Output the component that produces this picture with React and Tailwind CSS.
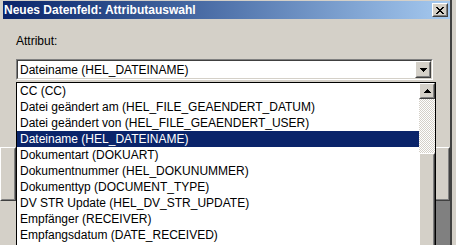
import React from "react";

const items = [
  "CC (CC)",
  "Datei geändert am (HEL_FILE_GEAENDERT_DATUM)",
  "Datei geändert von (HEL_FILE_GEAENDERT_USER)",
  "Dateiname (HEL_DATEINAME)",
  "Dokumentart (DOKUART)",
  "Dokumentnummer (HEL_DOKUNUMMER)",
  "Dokumenttyp (DOCUMENT_TYPE)",
  "DV STR Update (HEL_DV_STR_UPDATE)",
  "Empfänger (RECEIVER)",
  "Empfangsdatum (DATE_RECEIVED)",
];

const selected = 3;

function Raised({ className = "", children }) {
  return (
    <div className={`border border-t-white border-l-white border-r-[#404040] border-b-[#404040] bg-[#d4d0c8] ${className}`}>
      <div className="w-full h-full border border-t-[#d4d0c8] border-l-[#d4d0c8] border-r-[#808080] border-b-[#808080] flex items-center justify-center">
        {children}
      </div>
    </div>
  );
}

export default function App() {
  return (
    <div className="relative w-[456px] h-[245px] overflow-hidden bg-[#d4d0c8] text-[12px] leading-[16px] text-black font-['Liberation_Sans',Arial,sans-serif]">
      <div className="w-[452px] h-full border-r-2 border-r-[#404040] pl-[3px] pt-[1px] flex flex-col">
        <div className="h-[18px] w-[447px] flex items-center justify-between pl-[1px] pr-[2px] bg-gradient-to-r from-[#0a246a] to-[#a6caf0]">
          <span className="text-white font-bold">Neues Datenfeld: Attributauswahl</span>
          <Raised className="w-[16px] h-[14px]">
            <svg width="8" height="7" viewBox="0 0 8 7">
              <path d="M0 0h2v1h1v1h2V1h1V0h2v1h-1v1h-1v1h-1v1h1v1h1v1h1v1H6V6H5V5H3v1H2v1H0V6h1V5h1V4h1V3H2V2H1V1H0z" fill="#000" />
            </svg>
          </Raised>
        </div>
        <div className="pl-[13px] pt-[14px]">
          <div>Attribut:</div>
          <div className="mt-[10px] w-[417px] h-[21px] border border-t-[#808080] border-l-[#808080] border-r-white border-b-white">
            <div className="h-full border border-t-[#404040] border-l-[#404040] border-r-[#d4d0c8] border-b-[#d4d0c8] bg-white flex items-center">
              <span className="flex-1 pl-[2px]">Dateiname (HEL_DATEINAME)</span>
              <Raised className="w-[16px] h-[17px]">
                <svg width="7" height="4" viewBox="0 0 7 4">
                  <path d="M0 0h7v1H6v1H5v1H4v1H3V3H2V2H1V1H0z" fill="#000" />
                </svg>
              </Raised>
            </div>
          </div>
        </div>
        <div className="flex justify-between mt-[67px]">
          <Raised className="w-[16px] h-[54px] -ml-[3px]" />
          <Raised className="w-[16px] h-[54px]" />
        </div>
        <div className="flex-1 flex">
          <div className="flex-1" />
          <div className="w-[20px] bg-[#808080]" />
        </div>
      </div>

      <div className="absolute left-[16px] top-[82px] w-[420px] h-[170px] border border-black bg-white flex">
        <div className="flex-1">
          {items.map((t, i) => (
            <div
              key={t}
              className={`h-[16px] pl-[3px] whitespace-nowrap ${i === selected ? "bg-[#0a246a] text-white" : ""}`}
            >
              {t}
            </div>
          ))}
        </div>
        <div className="w-[16px] flex flex-col bg-[repeating-conic-gradient(#ffffff_0_25%,#d4d0c8_0_50%)] bg-[length:2px_2px]">
          <Raised className="w-[16px] h-[16px]">
            <svg width="7" height="4" viewBox="0 0 7 4">
              <path d="M3 0h1v1h1v1h1v1h1v1H0V3h1V2h1V1h1z" fill="#000" />
            </svg>
          </Raised>
          <div className="h-[54px]" />
          <Raised className="w-[16px] flex-1" />
        </div>
      </div>
    </div>
  );
}
